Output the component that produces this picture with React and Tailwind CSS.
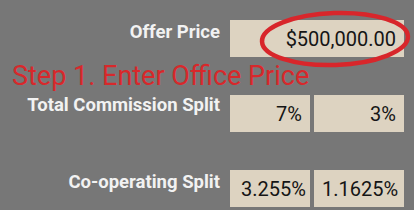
export default function App() {
  return (
    <div className="relative w-[414px] h-[210px] overflow-hidden bg-[#777777] font-['Roboto',_'Liberation_Sans',_sans-serif]">
      <div className="flex pt-[20px]">
        <div className="w-[220px] pt-[2px] text-right text-[18.5px] leading-[20px] font-bold whitespace-nowrap text-[#f2f2f2]">Offer Price</div>
        <div className="ml-[10px] flex h-[37px] w-[174px] items-center justify-end bg-[#ddd3c1] pr-[8px] text-[20px] text-[#151515]">
          $500,000.00
        </div>
      </div>

      <div className="mt-[5px] h-[28px] pl-[12px] text-[27px] leading-[28px] text-[#d8282b] whitespace-nowrap">
        Step 1. Enter Office Price
      </div>

      <div className="mt-[5px] flex">
        <div className="w-[220px] text-right text-[18.5px] leading-[20px] font-bold whitespace-nowrap text-[#f2f2f2]">Total Commission Split</div>
        <div className="ml-[10px] flex gap-[4px]">
          <div className="flex h-[37px] w-[80px] items-center justify-end bg-[#ddd3c1] pr-[8px] text-[20px] text-[#151515]">7%</div>
          <div className="flex h-[37px] w-[90px] items-center justify-end bg-[#ddd3c1] pr-[8px] text-[20px] text-[#151515]">3%</div>
        </div>
      </div>

      <div className="mt-[38px] flex">
        <div className="w-[220px] pt-[2px] text-right text-[18.5px] leading-[20px] font-bold whitespace-nowrap text-[#f2f2f2]">Co-operating Split</div>
        <div className="ml-[10px] flex gap-[4px]">
          <div className="flex h-[37px] w-[80px] items-center justify-end overflow-hidden bg-[#ddd3c1] pr-[4px] text-[20px] text-[#151515]">3.255%</div>
          <div className="flex h-[37px] w-[90px] items-center justify-start overflow-hidden whitespace-nowrap bg-[#ddd3c1] pl-[8px] text-[20px] text-[#151515]">1.1625%</div>
        </div>
      </div>

      <svg className="absolute left-[257px] top-[9px]" width="156" height="60" viewBox="0 0 156 60">
        <ellipse cx="78" cy="30" rx="73" ry="26" fill="none" stroke="#d8262b" strokeWidth="4.5" transform="rotate(-2 78 30)" />
      </svg>
    </div>
  );
}
